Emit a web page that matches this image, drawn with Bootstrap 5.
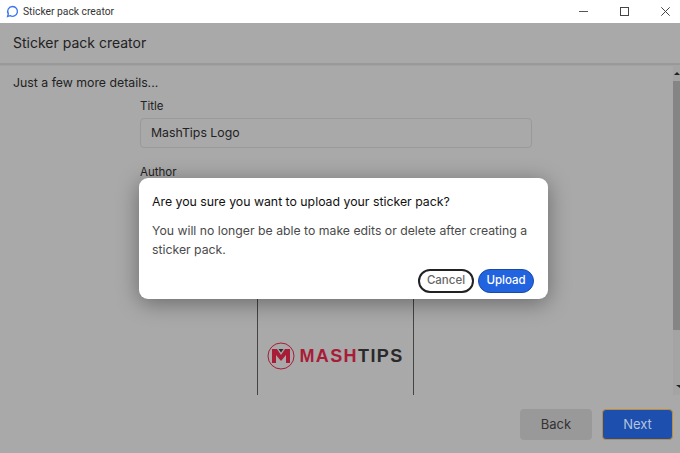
<!DOCTYPE html>
<html lang="en">
<head>
  <meta charset="UTF-8" />
  <meta name="viewport" content="width=device-width, initial-scale=1" />
  <title>Sticker pack creator</title>
  <link href="https://cdn.jsdelivr.net/npm/bootstrap@5.3.3/dist/css/bootstrap.min.css" rel="stylesheet" />
  <style>
    html, body { height: 100%; overflow: hidden; }
    body { font-family: Inter, "Liberation Sans", sans-serif; background: #a9a9a9; color: #222; }
    .win-bar { height: 23px; background: #fff; font-family: Roboto, "Liberation Sans", sans-serif; font-size: 10.3px; color: #333; padding-left: 6px; }
    .win-btns { gap: 11px; }
    .win-btn { width: 30px; height: 23px; }
    .app-area { height: 430px; }
    .app-head { height: 42px; padding-left: 13px; padding-bottom: 2px; font-size: 14px; color: #222; border-bottom: 2px solid #999; }
    .scroll-area { height: 330px; overflow: hidden; }
    .scroll-body { padding: 9px 0 0 13px; font-size: 12.3px; line-height: 16px; border-top: 1px solid #a2a2a2; }
    .form-col { width: 392px; margin-left: 127px; }
    .field-label { font-size: 11.5px; line-height: 14px; margin-top: 8px; margin-bottom: 5px; }
    .field-box { height: 30px; border: 1px solid #999; border-radius: 4px; padding-left: 10px; font-size: 12.3px; margin-bottom: 17px; }
    .preview-gap { height: 114px; }
    .preview-box { width: 157px; height: 110px; margin-left: 244px; border-left: 1px solid #444; border-right: 1px solid #444; padding-top: 5px; }
    .logo-word { font-family: "Liberation Sans", sans-serif; font-weight: 700; font-size: 18px; line-height: 26px; letter-spacing: 1.4px; }
    .logo-red { color: #a81c38; }
    .logo-dark { color: #2a2a2c; }
    .scroll-track { width: 7px; background: #a4a4a4; }
    .scroll-thumb { height: 249px; background: #858585; }
    .scroll-end { height: 16px; }
    .scroll-end-low { height: 65px; }
    .foot-row { height: 58px; padding: 14px 7px 0 0; gap: 10px; }
    .foot-btn { height: 31px; font-size: 13px; border-radius: 4px; padding: 0; }
    .foot-back { width: 72px; background: #999; color: #333; border: 0; }
    .foot-next { width: 71px; background: #1c4fae; color: #b5c3de; border: 1px solid #c08d35; }
    .confirm-shade { left: 139px; top: 178px; width: 409px; height: 121px; background: #fff; border-radius: 9px; box-shadow: 0 4px 22px rgba(0,0,0,.38); padding: 15px 13px 0 13px; }
    .confirm-title { font-size: 12.3px; line-height: 17px; font-weight: 400; color: #111; margin-bottom: 11px; }
    .confirm-text { font-size: 12.25px; line-height: 19px; color: #4a4a4a; }
    .pill { width: 56px; height: 24px; border-radius: 12px; font-size: 11.5px; font-weight: 500; padding: 0; }
    .pill-cancel { background: #fff; color: #666; border: 2px solid #222; }
    .pill-ok { background: #2263e0; color: #fff; border: 1px solid #1b4aa6; }
    .confirm-actions { margin-top: 10px; padding-right: 1px; gap: 4px; }
  </style>
</head>
<body class="position-relative">

  <!-- title bar -->
  <div class="win-bar d-flex align-items-center">
    <svg width="13" height="13" viewBox="0 0 14 14" class="me-1 flex-shrink-0">
      <path d="M7 1.6a5.3 5.3 0 1 1-2.6 9.9L1.7 12.3l.8-2.7A5.3 5.3 0 0 1 7 1.6z" fill="none" stroke="#3a76f0" stroke-width="1.5" />
    </svg>
    <span class="flex-grow-1">Sticker pack creator</span>
    <div class="win-btns d-flex">
      <div class="win-btn d-flex align-items-center justify-content-center">
        <svg width="9" height="9" viewBox="0 0 9 9"><path d="M0 4.5h9" stroke="#555" stroke-width="1" /></svg>
      </div>
      <div class="win-btn d-flex align-items-center justify-content-center">
        <svg width="9" height="9" viewBox="0 0 9 9"><rect x=".5" y=".5" width="8" height="8" fill="none" stroke="#444" stroke-width="1" /></svg>
      </div>
      <div class="win-btn d-flex align-items-center justify-content-center">
        <svg width="9" height="9" viewBox="0 0 9 9"><path d="M.3.3l8.4 8.4M8.7.3L.3 8.7" stroke="#444" stroke-width="1" /></svg>
      </div>
    </div>
  </div>

  <div class="app-area d-flex flex-column">
    <div class="app-head d-flex align-items-center">Sticker pack creator</div>

    <div class="scroll-area d-flex">
      <div class="scroll-body flex-grow-1">
        <div>Just a few more details...</div>
        <div class="form-col">
          <div class="field-label">Title</div>
          <div class="field-box d-flex align-items-center">MashTips Logo</div>
          <div class="field-label">Author</div>
        </div>
        <div class="preview-gap"></div>
        <div class="preview-box d-flex align-items-center justify-content-center gap-1">
          <svg width="28" height="28" viewBox="0 0 28 28" class="flex-shrink-0">
            <circle cx="14" cy="14" r="13" fill="none" stroke="#a81c38" stroke-width="1" />
            <path d="M5 21V7h5l4 6 4-6h5v14h-4v-8l-5 6-5-6v8z" fill="#a81c38" />
            <path d="M11.5 7h5L14 10.5z" fill="#2a2a2c" />
          </svg>
          <span class="logo-word"><span class="logo-red">MASH</span><span class="logo-dark">TIPS</span></span>
        </div>
      </div>
      <div class="scroll-track flex-shrink-0 d-flex flex-column">
        <svg class="scroll-end" width="7" height="16" viewBox="0 0 7 16"><path d="M1 10l3-3 3 3z" fill="#222" /></svg>
        <div class="scroll-thumb"></div>
        <svg class="scroll-end-low" width="7" height="65" viewBox="0 0 7 65"><path d="M3 55h4v3z" fill="#222" /></svg>
      </div>
    </div>

    <div class="foot-row d-flex justify-content-end">
      <button class="btn foot-btn foot-back">Back</button>
      <button class="btn foot-btn foot-next">Next</button>
    </div>
  </div>

  <!-- confirm dialog, sits over the form -->
  <div class="confirm-shade position-absolute">
    <div class="confirm-title">Are you sure you want to upload your sticker pack?</div>
    <div class="confirm-text">You will no longer be able to make edits or delete after creating a sticker pack.</div>
    <div class="confirm-actions d-flex justify-content-end">
      <button class="btn pill pill-cancel">Cancel</button>
      <button class="btn pill pill-ok">Upload</button>
    </div>
  </div>

  <script src="https://cdn.jsdelivr.net/npm/bootstrap@5.3.3/dist/js/bootstrap.bundle.min.js"></script>
</body>
</html>
